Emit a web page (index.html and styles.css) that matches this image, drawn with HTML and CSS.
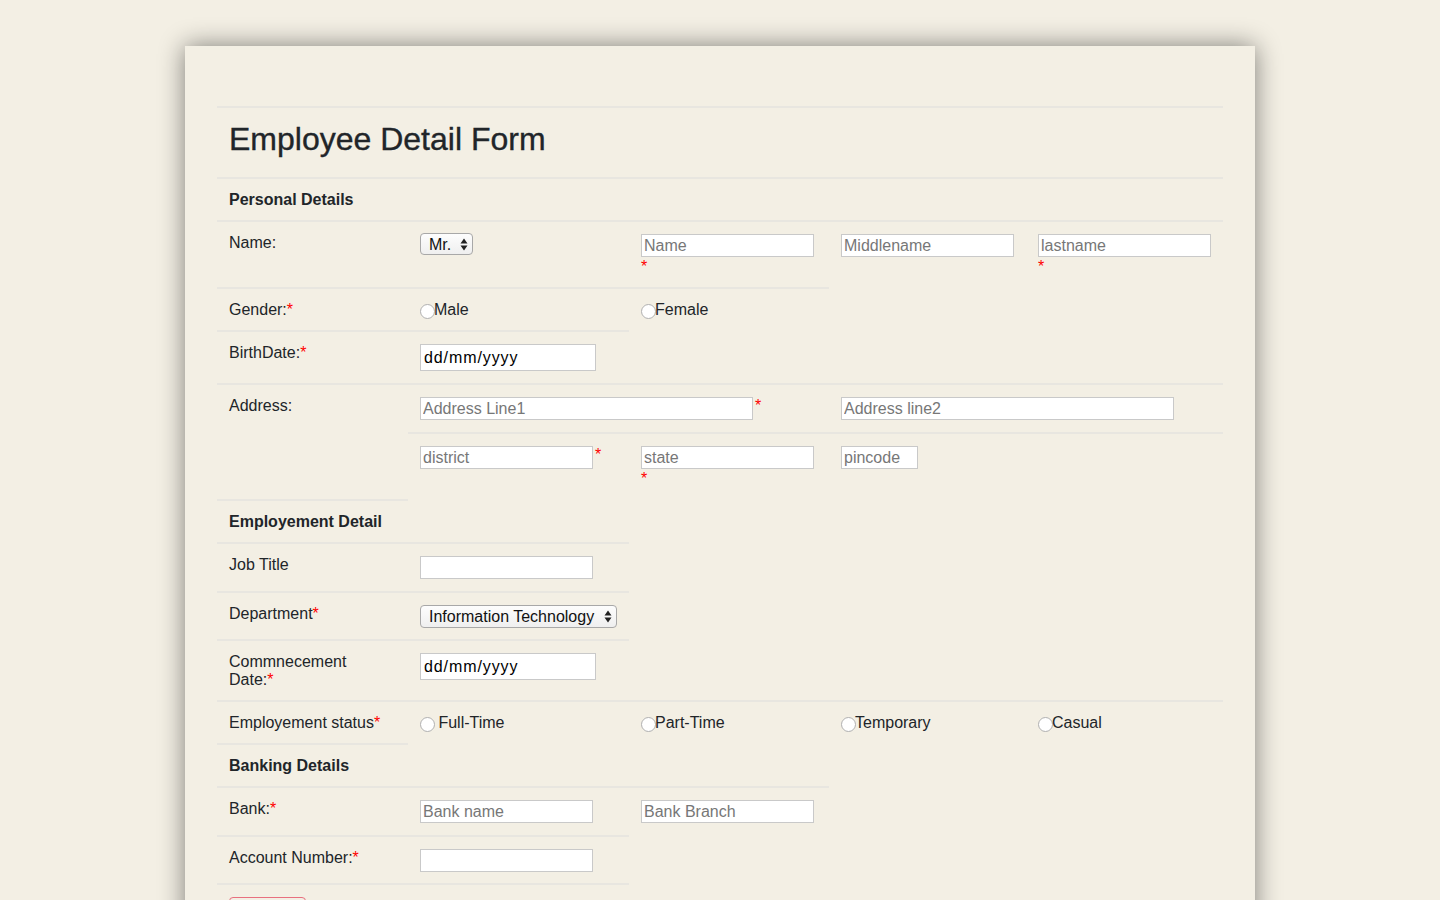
FILE: index.html
```html
<!DOCTYPE html>
<html lang="en">
<head>
<meta charset="utf-8">
<title>Employee Detail Form</title>
<link rel="stylesheet" href="styles.css">
</head>
<body>
<div class="card">
  <table class="form-table">
    <colgroup>
      <col class="c1"><col class="c2"><col class="c3"><col class="c4"><col class="c5">
    </colgroup>
    <tr>
      <td colspan="5"><h2 class="title">Employee Detail Form</h2></td>
    </tr>
    <tr>
      <th colspan="5">Personal Details</th>
    </tr>
    <tr>
      <td>Name:</td>
      <td><span class="select sel-mr">Mr.<svg class="arrows" width="8" height="13" viewBox="0 0 8 13"><path d="M4 0.5 L7.5 5.5 H0.5 Z M4 12.5 L7.5 7.5 H0.5 Z" fill="#222"/></svg></span></td>
      <td><input class="field" type="text" placeholder="Name"><span class="req block">*</span></td>
      <td><input class="field" type="text" placeholder="Middlename"></td>
      <td><input class="field" type="text" placeholder="lastname"><span class="req block">*</span></td>
    </tr>
    <tr>
      <td>Gender:<span class="req">*</span></td>
      <td><label class="radio"><input type="radio" name="g">Male</label></td>
      <td><label class="radio"><input type="radio" name="g">Female</label></td>
    </tr>
    <tr>
      <td>BirthDate:<span class="req">*</span></td>
      <td><input class="field date" type="text" value="dd/mm/yyyy"></td>
    </tr>
    <tr>
      <td rowspan="2">Address:</td>
      <td colspan="2"><input class="field wide" type="text" placeholder="Address Line1"><span class="req side">*</span></td>
      <td colspan="2"><input class="field wide" type="text" placeholder="Address line2"></td>
    </tr>
    <tr>
      <td><input class="field" type="text" placeholder="district"><span class="req side">*</span></td>
      <td><input class="field" type="text" placeholder="state"><span class="req block">*</span></td>
      <td><input class="field pin" type="text" placeholder="pincode"></td>
      <td></td>
    </tr>
    <tr>
      <th>Employement Detail</th>
    </tr>
    <tr>
      <td>Job Title</td>
      <td><input class="field" type="text"></td>
    </tr>
    <tr>
      <td>Department<span class="req">*</span></td>
      <td><span class="select sel-dept">Information Technology<svg class="arrows" width="8" height="13" viewBox="0 0 8 13"><path d="M4 0.5 L7.5 5.5 H0.5 Z M4 12.5 L7.5 7.5 H0.5 Z" fill="#222"/></svg></span></td>
    </tr>
    <tr>
      <td>Commnecement<br>Date:<span class="req">*</span></td>
      <td><input class="field date" type="text" value="dd/mm/yyyy"></td>
    </tr>
    <tr>
      <td>Employement status<span class="req">*</span></td>
      <td><label class="radio"><input type="radio" name="s"> Full-Time</label></td>
      <td><label class="radio"><input type="radio" name="s">Part-Time</label></td>
      <td><label class="radio"><input type="radio" name="s">Temporary</label></td>
      <td><label class="radio"><input type="radio" name="s">Casual</label></td>
    </tr>
    <tr>
      <th>Banking Details</th>
    </tr>
    <tr>
      <td>Bank:<span class="req">*</span></td>
      <td><input class="field" type="text" placeholder="Bank name"></td>
      <td><input class="field" type="text" placeholder="Bank Branch"></td>
    </tr>
    <tr>
      <td>Account Number:<span class="req">*</span></td>
      <td><input class="field flat" type="text"></td>
    </tr>
    <tr>
      <td><button class="btn-submit" type="submit">Submit</button></td>
      <td></td>
    </tr>
  </table>
</div>
</body>
</html>
```

FILE: styles.css
```css
html, body {
  margin: 0;
  padding: 0;
  background: #f3efe4;
  overflow: hidden;
  height: 100%;
}

body {
  font-family: "Liberation Sans", Arial, sans-serif;
  font-size: 16px;
  color: #212529;
}

.card {
  width: 1070px;
  box-sizing: border-box;
  margin: 46px auto 0;
  padding: 60px 32px 40px;
  background: #f3efe4;
  box-shadow: 0 0 24px rgba(0, 0, 0, 0.48);
}

.form-table {
  width: 1006px;
  table-layout: fixed;
  border-collapse: separate;
  border-spacing: 0;
}

.c1 { width: 191px; }
.c2 { width: 221px; }
.c3 { width: 200px; }
.c4 { width: 197px; }
.c5 { width: 197px; }

.form-table td,
.form-table th {
  border-top: 2px solid #e8e6e0;
  padding: 12px 12px 11px;
  vertical-align: top;
  text-align: left;
  line-height: 18px;
  font-weight: normal;
}

.form-table th {
  font-weight: bold;
}

.title {
  margin: 0 0 8px;
  font-size: 32px;
  line-height: 38px;
  font-weight: normal;
  color: #212529;
  -webkit-text-stroke: 0.35px #212529;
}

.req {
  color: #ff0000;
}

.req.block {
  display: block;
  line-height: 18px;
}

.req.side {
  margin-left: 2px;
}

.field {
  display: inline-block;
  vertical-align: top;
  box-sizing: border-box;
  width: 173px;
  height: 23px;
  margin: 0 0 1px;
  padding: 0 2px;
  border: 1px solid #c9c9c9;
  background: #ffffff;
  font-family: "Liberation Sans", Arial, sans-serif;
  font-size: 16px;
  color: #000;
  outline: none;
}

.field::placeholder {
  color: #777777;
}

.field.date {
  width: 176px;
  height: 27px;
  padding: 0 3px;
  letter-spacing: 0.9px;
  margin: 0 0 1px;
}

.field.wide {
  width: 333px;
}

.field.pin {
  width: 77px;
}

.field.flat {
  margin-bottom: 0;
}

.select {
  display: inline-flex;
  align-items: center;
  justify-content: space-between;
  box-sizing: border-box;
  height: 23px;
  padding: 0 4px 0 8px;
  border: 1px solid #a8a8a8;
  border-radius: 4px;
  background: linear-gradient(#fdfdfd, #efefef);
  color: #111;
  font-size: 16px;
  line-height: 21px;
}

.sel-mr {
  width: 53px;
  height: 22px;
  margin-top: -1px;
}

.sel-dept {
  width: 197px;
}

.arrows {
  display: block;
  flex: none;
}

.radio {
  display: inline-block;
  line-height: 18px;
  white-space: nowrap;
}

.radio input {
  -webkit-appearance: none;
  appearance: none;
  width: 15px;
  height: 15px;
  margin: 0 -1px 0 0;
  border: 1px solid #b0b0b0;
  border-radius: 50%;
  background: #fff;
  vertical-align: -4px;
  box-sizing: border-box;
}

.btn-submit {
  display: block;
  width: 77px;
  height: 38px;
  margin-top: 0;
  padding: 14px 0 0;
  border: 1px solid #e8707f;
  border-radius: 4px;
  background: transparent;
  color: #dc3545;
  font-family: "Liberation Sans", Arial, sans-serif;
  font-size: 16px;
  line-height: 18px;
}
```
